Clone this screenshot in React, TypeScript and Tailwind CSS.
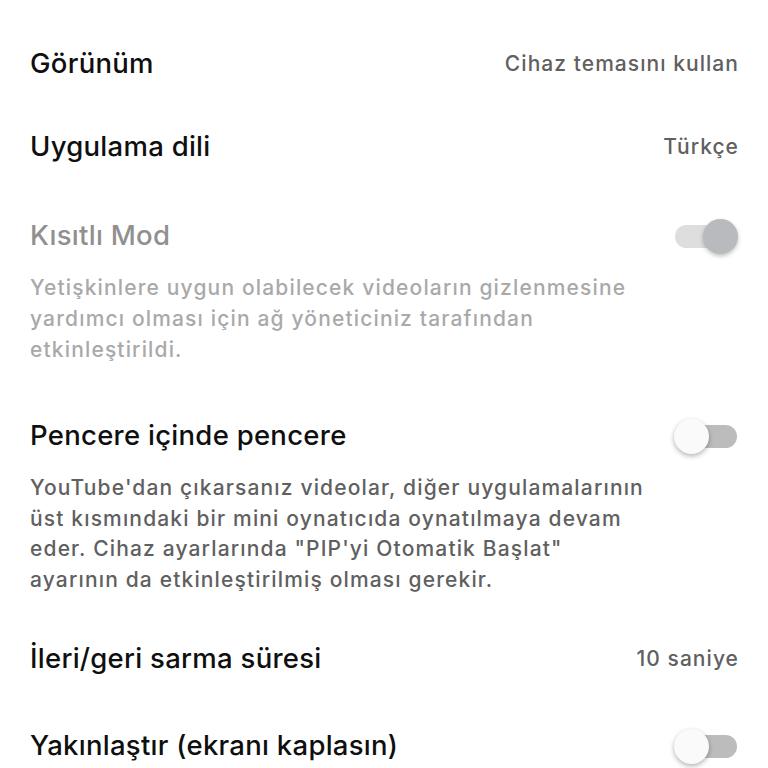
import React from "react";

function Toggle({ disabled, on }: { on: boolean; disabled?: boolean }) {
  return (
    <div className="relative w-[64px] h-[36px] flex items-center">
      <div
        className={
          "absolute h-[23px] rounded-full " +
          (disabled ? "left-[1px] w-[50px] bg-[#dedede]" : "right-[1px] w-[50px] bg-[#bcbcbc]")
        }
      />
      <div
        className={
          "absolute h-[35px] w-[35px] rounded-full " +
          (on
            ? "right-0 bg-[#b8babe] shadow-[0_2px_4px_rgba(0,0,0,0.25)]"
            : "left-0 bg-[#fafafa] shadow-[0_2px_5px_rgba(0,0,0,0.3)]")
        }
      />
    </div>
  );
}

const title = "text-[27.5px] tracking-[0.01em] font-medium";
const value = "text-[21px] tracking-[0.05em] font-medium text-[#606060] -mr-[1px]";

export default function App() {
  const font = { fontFamily: "Inter, 'Noto Sans', sans-serif" };
  return (
    <div className="w-[768px] h-[768px] bg-white overflow-hidden pl-[30px] pr-[30px]" style={font}>
      <div className="flex items-center justify-between h-[42px] mt-[43px]">
        <span className={title + " text-[#0f0f0f]"}>Görünüm</span>
        <span className={value}>Cihaz temasını kullan</span>
      </div>
      <div className="flex items-center justify-between h-[42px] mt-[41px]">
        <span className={title + " text-[#0f0f0f]"}>Uygulama dili</span>
        <span className={value}>Türkçe</span>
      </div>
      <div className="flex items-center justify-between h-[42px] mt-[47px]">
        <span className={title + " text-[#909090]"}>Kısıtlı Mod</span>
        <Toggle on disabled />
      </div>
      <p className="mt-[15px] text-[21px] tracking-[0.055em] leading-[31px] font-medium text-[#a9a9a9]">
        Yetişkinlere uygun olabilecek videoların gizlenmesine
        <br />
        yardımcı olması için ağ yöneticiniz tarafından
        <br />
        etkinleştirildi.
      </p>
      <div className="flex items-center justify-between h-[42px] mt-[50px]">
        <span className={title + " text-[#0f0f0f]"}>Pencere içinde pencere</span>
        <Toggle on={false} />
      </div>
      <p className="mt-[16px] text-[21px] tracking-[0.055em] leading-[30.5px] font-medium text-[#606060]">
        YouTube'dan çıkarsanız videolar, diğer uygulamalarının
        <br />
        üst kısmındaki bir mini oynatıcıda oynatılmaya devam
        <br />
        eder. Cihaz ayarlarında "PIP'yi Otomatik Başlat"
        <br />
        ayarının da etkinleştirilmiş olması gerekir.
      </p>
      <div className="flex items-center justify-between h-[42px] mt-[43px]">
        <span className={title + " text-[#0f0f0f]"}>İleri/geri sarma süresi</span>
        <span className={value}>10 saniye</span>
      </div>
      <div className="flex items-center justify-between h-[42px] mt-[45px]">
        <span className={title + " text-[#0f0f0f]"}>Yakınlaştır (ekranı kaplasın)</span>
        <Toggle on={false} />
      </div>
    </div>
  );
}
